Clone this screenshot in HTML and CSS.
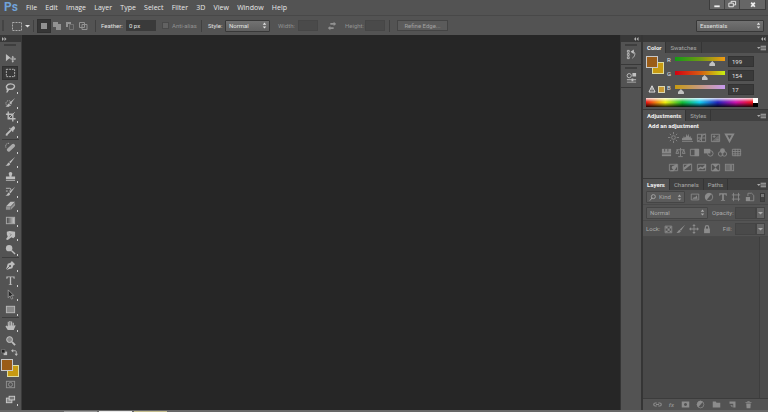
FILE: index.html
```html
<!DOCTYPE html>
<html lang="en">
<head>
<meta charset="utf-8">
<title>Photo editor</title>
<link rel="stylesheet" href="styles.css">
</head>
<body>
<svg class="defs" aria-hidden="true">
  <symbol id="updown" viewBox="0 0 5 8"><path d="M0.5 3L2.5 0.500L4.500 3zM0.500 5L2.500 7.500L4.500 5z"/></symbol>
  <symbol id="down" viewBox="0 0 5 8"><path d="M0 3h5L2.500 5.500z"/></symbol>
  <symbol id="flyout" viewBox="0 0 10 6"><path d="M0 2h4L2 4zM4 0.500h6v1H4zM4 2.500h6v1H4zM4 4.500h6v1H4z"/></symbol>
  <symbol id="marquee" viewBox="0 0 12 12"><rect x="1.500" y="2.500" width="9" height="8" class="line" stroke-dasharray="2 1"/></symbol>
  <symbol id="brush" viewBox="0 0 12 12"><path d="M11 1L6 8L4.500 6.500zM4 7l1.800 1.700C5 10.500 3 11 0.500 10.500C2.500 9.800 2.500 8 4 7z"/></symbol>
  <symbol id="move" viewBox="0 0 12 12"><path d="M6 0l2 2.500H6.500v3h3V4L12 6L9.500 8V6.500h-3v3H8L6 12L4 9.500h1.500v-3h-3V8L0 6l2.500-2v1.500h3v-3H4z"/></symbol>
  <symbol id="half" viewBox="0 0 12 12"><circle cx="6" cy="6" r="4.500" class="line"/><path d="M9 2.500A4.500 4.500 0 0 0 3 9.500z"/></symbol>
</svg>

<div class="app">
  <header class="menubar">
    <span class="logo">Ps</span>
    <nav class="menu">
      <a href="#">File</a><a href="#">Edit</a><a href="#">Image</a><a href="#">Layer</a><a href="#">Type</a><a href="#">Select</a><a href="#">Filter</a><a href="#">3D</a><a href="#">View</a><a href="#">Window</a><a href="#">Help</a>
    </nav>
    <div class="window-buttons">
      <button aria-label="Minimize"><svg viewBox="0 0 12 10"><path d="M3 6h6v2H3z"/></svg></button>
      <button aria-label="Restore"><svg viewBox="0 0 12 10"><path class="line" d="M5 3.500v-2h5v4H8M2.500 3.500H7.500v4h-5z"/></svg></button>
      <button class="close" aria-label="Close"><svg viewBox="0 0 12 10"><path class="line thick" d="M4 3l4 4.500M8 3L4 7.500"/></svg></button>
    </div>
  </header>

  <div class="options">
    <span class="grip"></span>
    <button class="preset" aria-label="Tool preset"><svg class="icon" viewBox="0 0 12 12"><use href="#marquee"/></svg><svg class="arrows"><use href="#down"/></svg></button>
    <span class="rule"></span>
    <div class="modes">
      <button class="on" aria-label="New selection"><svg class="icon" viewBox="0 0 12 12"><rect x="3" y="3" width="6" height="6" class="soft"/></svg></button>
      <button aria-label="Add to selection"><svg class="icon" viewBox="0 0 12 12"><path class="soft" d="M2 2h5v2h3v6H5V7H2z"/></svg></button>
      <button aria-label="Subtract from selection"><svg class="icon" viewBox="0 0 12 12"><path class="soft" d="M2 2h5v2H4v3H2z"/><path class="line" d="M5.500 4.500h4v5h-4z" opacity=".5"/></svg></button>
      <button aria-label="Intersect with selection"><svg class="icon" viewBox="0 0 12 12"><path class="line" d="M2.500 2.500h5v5h-5zM5 4.500h5v5H5z"/></svg></button>
    </div>
    <span class="rule"></span>
    <label class="field feather">Feather: <input type="text" value="0 px"></label>
    <label class="field anti dim"><input type="checkbox" disabled>Anti-alias</label>
    <span class="rule"></span>
    <label class="field style">Style: <span class="select"><select><option>Normal</option></select><svg class="arrows"><use href="#updown"/></svg></span></label>
    <label class="field size dim">Width: <input type="text" disabled></label>
    <button class="swap dim" aria-label="Swap width and height"><svg class="icon" viewBox="0 0 12 12"><path d="M4 2.500h4V1l3 2.500L8 6V4.500H4zM8 7.500H4V6L1 8.500L4 11V9.500h4z"/></svg></button>
    <label class="field size dim">Height: <input type="text" disabled></label>
    <span class="rule"></span>
    <button class="refine">Refine Edge...</button>
    <span class="select workspace"><select aria-label="Workspace"><option>Essentials</option></select><svg class="arrows"><use href="#updown"/></svg></span>
  </div>

  <main class="work">
    <aside class="tools">
      <div class="dock-head left"><svg viewBox="0 0 5 4"><path d="M0 0l2 2l-2 2zM2.500 0l2 2l-2 2z"/></svg></div>
      <span class="handle"></span>
      <div class="group six">
        <button aria-label="Move"><svg class="icon" viewBox="0 0 12 12"><path d="M1 1l6 5H4.500L1 9z"/><path d="M8.500 3l1.500 2H9v1h1.500V5L12 6.500L10.500 8V7H9v1.500h1L8.500 10.500L7 8.500h1V7H6V6h2V5H7z"/></svg></button>
        <button class="more on" aria-label="Marquee"><svg class="icon" viewBox="0 0 12 12"><use href="#marquee"/></svg></button>
        <button class="more" aria-label="Lasso"><svg class="icon" viewBox="0 0 12 12"><path class="line medium" d="M3 7.500C0 6 2 2 6 2s5 2.500 4 4s-4 2.500-7 1.500c-1 0-1 1.500 0 1.500s1-1 0-1.500M3 9c0 1-.5 2-1.500 2"/></svg></button>
        <button class="more" aria-label="Quick selection"><svg class="icon" viewBox="0 0 12 12"><use href="#brush"/><ellipse class="line" cx="4" cy="7" rx="3" ry="3" stroke-dasharray="1 1"/></svg></button>
        <button class="more" aria-label="Crop"><svg class="icon" viewBox="0 0 12 12"><path class="line medium" d="M3.500 0.500v8h8M1 3.500h7.500V11.500"/><path class="line" d="M4 8L10.500 1.500"/></svg></button>
        <button class="more" aria-label="Eyedropper"><svg class="icon" viewBox="0 0 12 12"><path d="M8 1c1-1.500 4 0 2.500 2.500L9 5l.5.500l-1 1l-4-4l1-1L6 3z"/><path class="line thick" d="M6.500 4.500L2 9l-.500 1.500"/></svg></button>
      </div>
      <div class="group eight">
        <button class="more" aria-label="Healing brush"><svg class="icon" viewBox="0 0 12 12"><path class="bandage" d="M4 8.500L9 4"/><path class="line" d="M1 6C0 3 2 1 4.500 1.500" stroke-dasharray="1 1"/></svg></button>
        <button class="more" aria-label="Brush"><svg class="icon" viewBox="0 0 12 12"><use href="#brush"/></svg></button>
        <button class="more" aria-label="Clone stamp"><svg class="icon" viewBox="0 0 12 12"><path d="M4 3a2 2 0 0 1 4 0L7 6h4v3H1V6h4zM1 10h10v1H1z"/></svg></button>
        <button class="more" aria-label="History brush"><svg class="icon" viewBox="0 0 12 12"><use href="#brush"/><path class="line" d="M1 2.500h4c2 0 2 2 0 2.500M1 5.500h2"/></svg></button>
        <button class="more" aria-label="Eraser"><svg class="icon" viewBox="0 0 12 12"><path d="M6 2h5L6 7H1z"/><path class="soft" d="M1 7.500h5v3H1zM6.500 7.500L11 3v3l-4.500 4.500z"/></svg></button>
        <button class="more" aria-label="Gradient"><svg class="icon" viewBox="0 0 12 12"><defs><linearGradient id="g"><stop stop-color="#444"/><stop offset="1" stop-color="#ccc"/></linearGradient></defs><rect x="1.500" y="2.500" width="9" height="7" fill="url(#g)" stroke="#aaa"/></svg></button>
        <button class="more" aria-label="Smudge"><svg class="icon" viewBox="0 0 12 12"><path d="M2 2l3-1l6 1v5l-2 2l-2-1l-4 3l-2-1l2-3l-1-2z"/><path d="M5 4l2 1l-2 2" fill="none" stroke="#777" stroke-width=".7"/></svg></button>
        <button class="more" aria-label="Dodge"><svg class="icon" viewBox="0 0 12 12"><circle cx="4.500" cy="4.500" r="3.500"/><path class="line medium" d="M7 7l4 4"/></svg></button>
      </div>
      <div class="group four">
        <button class="more" aria-label="Pen"><svg class="icon" viewBox="0 0 12 12"><path d="M7.500 1L11 4.500L9 6l-1 3l-7 2l2-7l3-1z"/><path d="M1 11l4-4" stroke="#444" stroke-width=".8"/><circle cx="5.500" cy="6.500" r="1" fill="#444"/></svg></button>
        <button class="more" aria-label="Type"><svg class="icon" viewBox="0 0 12 12"><path d="M1.500 1.500h9V4H9.500L9 2.500H6.700v7.500l1.300.5v.5H4v-.5l1.300-.5V2.500H3L2.500 4h-1z"/></svg></button>
        <button class="more" aria-label="Path selection"><svg class="icon" viewBox="0 0 12 12"><path d="M3.500 1l6 6H7l1.500 3.500l-1.500.5L5.500 7.500l-2 2z" fill="#292929" stroke="#aaa" stroke-width=".8"/></svg></button>
        <button class="more" aria-label="Rectangle"><svg class="icon" viewBox="0 0 12 12"><rect x="1.500" y="2.500" width="9" height="7" fill="#888" stroke="#bbb"/></svg></button>
      </div>
      <div class="group two">
        <button class="more" aria-label="Hand"><svg class="icon" viewBox="0 0 12 12"><path d="M3 11L0.500 7l1-1L3 7V2h1.200v4h.5V1H6v5h.6V1.500h1.200V6h.6V3h1.200v4l1-1.500l1 .5L9.500 11z"/></svg></button>
        <button aria-label="Zoom"><svg class="icon" viewBox="0 0 12 12"><circle cx="5" cy="5" r="3.200" fill="#888" stroke="#ccc"/><path class="line thick" d="M7.500 7.500L11 11"/></svg></button>
      </div>
      <div class="mini">
        <button aria-label="Default colors"><svg viewBox="0 0 8 8"><path d="M3 3h4v4H3z"/><path d="M.5.5h4v4h-4z" fill="#222" stroke="#888" stroke-width=".7"/></svg></button>
        <button aria-label="Swap colors"><svg viewBox="0 0 8 8"><path class="line" d="M2 2h3q1 0 1 1v3"/><path d="M0 2l2.500-2v4zM6 8L4 5.500h4z"/></svg></button>
      </div>
      <div class="swatches"><button class="back" aria-label="Background color"></button><button class="fore" aria-label="Foreground color"></button></div>
      <button class="bottom-tool" aria-label="Quick mask"><svg class="icon" viewBox="0 0 12 12"><g opacity=".6"><rect class="line" x="1.500" y="2.500" width="9" height="7"/><circle class="line" cx="6" cy="6" r="2.200"/></g></svg></button>
      <button class="bottom-tool more" aria-label="Screen mode"><svg class="icon" viewBox="0 0 12 12"><rect x="1.500" y="4.500" width="6" height="5" fill="#888" stroke="#ccc"/><rect x="4.500" y="2.500" width="6" height="4" fill="#777" stroke="#ccc"/></svg></button>
    </aside>

    <section class="canvas" aria-label="Canvas"></section>

    <aside class="icon-dock">
      <div class="dock-head"><svg viewBox="0 0 5 4"><path d="M2 0L0 2l2 2zM4.500 0l-2 2l2 2z"/></svg></div>
      <div class="cell"><span class="handle"></span><button aria-label="History"><svg class="icon" viewBox="0 0 12 12"><path class="line" d="M1.500 1.500h2v2h-2zM1.500 5h2v2h-2zM1.500 8.500h2v2h-2zM6 3h1c4 0 3 5 0 7"/><path d="M8.500.5v5L5 3z"/></svg></button></div>
      <div class="cell"><span class="handle"></span><button aria-label="Properties"><svg class="icon" viewBox="0 0 12 12"><circle class="line" cx="3.500" cy="4" r="2.300"/><path d="M7 1h4v4H7zM1 8h5V7h2v1h3v1H8v1H6V9H1zM1 10.500h10v1H1z"/></svg></button></div>
    </aside>

    <aside class="panels">
      <div class="dock-head"><svg viewBox="0 0 5 4"><path d="M2 0L0 2l2 2zM4.500 0l-2 2l2 2z"/></svg></div>

      <section class="panel">
        <div class="tabs"><button class="on">Color</button><button>Swatches</button><svg class="flyout"><use href="#flyout"/></svg></div>
        <div class="color">
          <div class="picks">
            <div class="swatches"><button class="back" aria-label="Background"></button><button class="fore" aria-label="Foreground"></button></div>
            <div class="gamut"><svg viewBox="0 0 8 8"><path class="line" d="M4 .8L7 7H1z"/><path d="M3.500 2.500h1v3h-1z"/></svg><button aria-label="Nearest printable color"></button></div>
          </div>
          <div class="sliders">
            <label for="r">R</label><input id="r" class="red" type="range" max="255" value="199"><input type="text" value="199" aria-label="Red value">
            <label for="gr">G</label><input id="gr" class="green" type="range" max="255" value="154"><input type="text" value="154" aria-label="Green value">
            <label for="b">B</label><input id="b" class="blue" type="range" max="255" value="17"><input type="text" value="17" aria-label="Blue value">
          </div>
          <div class="ramp"><span class="spectrum"></span><span class="mono"></span></div>
        </div>
      </section>

      <section class="panel">
        <div class="tabs"><button class="on">Adjustments</button><button>Styles</button><svg class="flyout"><use href="#flyout"/></svg></div>
        <div class="adjust">
          <h2>Add an adjustment</h2>
          <div class="icons">
            <button aria-label="Brightness"><svg class="icon" viewBox="0 0 12 12"><circle class="line" cx="6" cy="6" r="2"/><path class="line" d="M6 0v2.500M6 9.500V12M0 6h2.500M9.500 6H12M2 2l1.500 1.500M8.500 8.500L10 10M10 2L8.500 3.500M3.500 8.500L2 10"/></svg></button>
            <button aria-label="Levels"><svg class="icon" viewBox="0 0 12 12"><path d="M0 9V7l1-1v1l1-3v3l1-2l1 1l1-4l1 3l1-3l1 4l1-2l1 3l1-1v3zM0 10h12v1H0z"/></svg></button>
            <button aria-label="Curves"><svg class="icon" viewBox="0 0 12 12"><path class="line" d="M1.500 2.500h9v8h-9zM1.500 10q4-1 4.500-4t4.500-4M1.500 6.500h9M6 2.500v8"/></svg></button>
            <button aria-label="Exposure"><svg class="icon" viewBox="0 0 12 12"><path class="line" d="M1.500 2.500h9v8h-9zM3 5h3M4.500 3.500v3M7 8.500h2.500"/><path d="M10 3v7H2z" opacity=".5"/></svg></button>
            <button aria-label="Vibrance"><svg class="icon" viewBox="0 0 12 12"><path class="line thick" d="M2 2.500h8L6 10z"/></svg></button>
          </div>
          <div class="icons">
            <button aria-label="Hue"><svg class="icon" viewBox="0 0 12 12"><path d="M1 2h10v8H1z"/><path d="M4 2v3M7.500 2v3M1 7.500h10" stroke="#555"/></svg></button>
            <button aria-label="Color balance"><svg class="icon" viewBox="0 0 12 12"><path class="line" d="M6 1v9M1.500 3h9M3.500 10.500h5M2.500 3L1 7h3zM9.500 3L8 7h3z"/></svg></button>
            <button aria-label="Black and white"><svg class="icon" viewBox="0 0 12 12"><path class="line" d="M1.500 2.500h9v7h-9z"/><path d="M6 2h5v8H6z"/></svg></button>
            <button aria-label="Photo filter"><svg class="icon" viewBox="0 0 12 12"><path d="M1 2h7v5H1z"/><circle class="line" cx="8" cy="7" r="3"/></svg></button>
            <button aria-label="Channel mixer"><svg class="icon" viewBox="0 0 12 12"><circle cx="6" cy="4" r="2.700"/><circle class="line" cx="4" cy="7.500" r="2.500"/><circle class="line" cx="8" cy="7.500" r="2.500"/></svg></button>
            <button aria-label="Color lookup"><svg class="icon" viewBox="0 0 12 12"><path class="line" d="M1.500 2.500h9v7h-9zM4.500 2v8M7.500 2v8M1 5h10M1 7.500h10"/></svg></button>
          </div>
          <div class="icons">
            <button aria-label="Invert"><svg class="icon" viewBox="0 0 12 12"><path class="line" d="M1.500 2.500h9v7h-9z"/><path d="M2 10l4-2a2 2 0 0 1 0-4l4-2v3L8 8l-2 2z"/></svg></button>
            <button aria-label="Posterize"><svg class="icon" viewBox="0 0 12 12"><path class="line" d="M1.500 2.500h9v7h-9z"/><path d="M2 6l5-4h4L2 9z"/></svg></button>
            <button aria-label="Threshold"><svg class="icon" viewBox="0 0 12 12"><path class="line" d="M1.500 2.500h9v7h-9z"/><path d="M2 7l3-2l2 1l4-4v4L7 8L5 7L2 9z"/></svg></button>
            <button aria-label="Selective color"><svg class="icon" viewBox="0 0 12 12"><path class="line" d="M1.500 2.500h9v7h-9z"/><path d="M2 2h8L6 6zM2 10h8L6 6z"/></svg></button>
            <button aria-label="Gradient map"><svg class="icon" viewBox="0 0 12 12"><rect class="line" x="1.500" y="2.500" width="9" height="7"/><path d="M2 3h4v6H2z" opacity=".5"/><path d="M6 3h3v6H6z" opacity=".8"/></svg></button>
          </div>
        </div>
      </section>

      <section class="panel layers">
        <div class="tabs"><button class="on">Layers</button><button>Channels</button><button>Paths</button><svg class="flyout"><use href="#flyout"/></svg></div>
        <div class="row filter">
          <span class="select kind"><svg class="search" viewBox="0 0 8 8"><circle class="line" cx="5" cy="3" r="2.300"/><path class="line" d="M3.500 4.500L1 7.500"/></svg><select aria-label="Filter type"><option>Kind</option></select><svg class="arrows"><use href="#updown"/></svg></span>
          <div class="filters">
            <button aria-label="Pixel layers"><svg class="icon" viewBox="0 0 12 12"><path class="line" d="M1.500 2.500h9v7h-9z"/><path d="M3 8l2-2l1 1l2-3l1 4z"/></svg></button>
            <button aria-label="Adjustment layers"><svg class="icon" viewBox="0 0 12 12"><use href="#half"/></svg></button>
            <button aria-label="Type layers"><svg class="icon" viewBox="0 0 12 12"><path d="M1.500 1.500h9v3h-1l-.5-1.500H7v6.500h1.500v1h-5v-1H5V3H3l-.5 1.500h-1z"/></svg></button>
            <button aria-label="Shape layers"><svg class="icon" viewBox="0 0 12 12"><path class="line" d="M3 1v10M9 1v10M1 3.500h10M1 8.500h10"/></svg></button>
            <button aria-label="Smart objects"><svg class="icon" viewBox="0 0 12 12"><path class="line" d="M3.500 5V1.500H8L10.500 4v6.500H6"/><path d="M1 6h5v5H1z"/></svg></button>
          </div>
          <button class="toggle" aria-label="Filter on or off"></button>
        </div>
        <div class="row blend">
          <span class="select"><select aria-label="Blend mode"><option>Normal</option></select><svg class="arrows"><use href="#updown"/></svg></span>
          <label for="opacity">Opacity:</label>
          <span class="combo"><input id="opacity" type="text"><button aria-label="Opacity slider"><svg class="arrows"><use href="#down"/></svg></button></span>
        </div>
        <div class="row lock">
          <span>Lock:</span>
          <button aria-label="Lock transparency"><svg class="icon" viewBox="0 0 12 12"><path class="line" d="M2.500 2.500h8v8h-8z"/><path d="M3 3h2.500v2.500H3zM8 3h2v2.500H8zM5.500 5.500H8V8H5.500zM3 8h2.500v2H3zM8 8h2v2H8z"/></svg></button>
          <button aria-label="Lock pixels"><svg class="icon" viewBox="0 0 12 12"><use href="#brush"/></svg></button>
          <button aria-label="Lock position"><svg class="icon" viewBox="0 0 12 12"><use href="#move"/></svg></button>
          <button aria-label="Lock all"><svg class="icon" viewBox="0 0 12 12"><path class="line medium" d="M4 6V4q0-2 2-2t2 2v2"/><path d="M2.500 5.500h7v5.500h-7z"/></svg></button>
          <label for="fill">Fill:</label>
          <span class="combo"><input id="fill" type="text"><button aria-label="Fill slider"><svg class="arrows"><use href="#down"/></svg></button></span>
        </div>
        <div class="list"><span class="scroll"></span></div>
        <div class="footer">
          <button aria-label="Link layers"><svg class="icon" viewBox="0 0 12 12"><path class="line medium" d="M5 4H3q-2 0-2 2t2 2h2M7 4h2q2 0 2 2t-2 2H7M4 6h4"/></svg></button>
          <button class="fx" aria-label="Layer style">fx</button>
          <button aria-label="Add mask"><svg class="icon" viewBox="0 0 12 12"><path fill-rule="evenodd" d="M1 2h10v8H1zM6 4a2 2 0 1 0 .01 0z"/></svg></button>
          <button aria-label="New adjustment layer"><svg class="icon" viewBox="0 0 12 12"><use href="#half"/></svg></button>
          <button aria-label="New group"><svg class="icon" viewBox="0 0 12 12"><path d="M1 2h4l1 1.500h5V10H1z"/></svg></button>
          <button aria-label="New layer"><svg class="icon" viewBox="0 0 12 12"><path d="M2 2h8v8H7V5H2zM3 7h3v3z"/></svg></button>
          <button aria-label="Delete layer"><svg class="icon" viewBox="0 0 12 12"><path d="M2 2.500h2.500v-1h3v1H10v1H2zM3 4.500h6L8.500 11h-5z"/></svg></button>
        </div>
      </section>
    </aside>
  </main>
  <footer class="taskbar"><span></span><span></span><span></span></footer>
</div>
</body>
</html>
```

FILE: styles.css
```css
* { box-sizing: border-box; }

body {
  margin: 0;
  background: #262626;
  color: #e2e2e2;
  font: 6px/8px Roboto, "Open Sans", sans-serif;
}

button, input, select {
  margin: 0;
  padding: 0;
  border: 0;
  background: none;
  color: inherit;
  font: inherit;
  appearance: none;
}

button { display: grid; place-items: center; }
select, input { min-width: 0; }
a { color: inherit; text-decoration: none; }
svg { display: block; fill: currentColor; }
.defs { position: absolute; width: 0; height: 0; }
.line { fill: none; stroke: currentColor; }
.medium { stroke-width: 1.5; }
.thick { stroke-width: 2; }
.soft { fill: #929292; }
.bandage { fill: none; stroke: #aaa; stroke-width: 4; stroke-linecap: round; }
.icon { width: 12px; height: 12px; }
.arrows { width: 5px; height: 8px; }
.dim { color: #929292; }

.app { display: flex; flex-direction: column; height: 100vh; }

/* Menu bar */
.menubar {
  display: flex;
  flex: 0 0 16px;
  background: #535353;
  border-bottom: 1px solid #484848;
}
.logo {
  width: 26px;
  padding-left: 4px;
  color: #70a2d8;
  font: bold 12px/15px Roboto, sans-serif;
}
.menu {
  display: flex;
  justify-content: space-between;
  width: 261px;
  color: #e8e8e8;
  font: 7px/15px "Open Sans", sans-serif;
}
.window-buttons {
  display: flex;
  height: 10px;
  margin: 0 2px 0 auto;
  border: 1px solid #3c3c3c;
  border-top: 0;
  background: #666;
}
.window-buttons button { width: 15px; border-right: 1px solid #444; color: #eee; }
.window-buttons .close { width: 25px; border: 0; }
.window-buttons svg { width: 12px; height: 9px; }

/* Options bar */
.options {
  display: flex;
  flex: 0 0 19px;
  align-items: center;
  padding: 0 4px 0 2px;
  background: #535353;
}
.grip { width: 2px; height: 11px; background: #444; }
.preset { display: flex; align-items: center; gap: 2px; padding-left: 7px; }
.preset .icon { color: #aaa; }
.rule { width: 1px; height: 12px; margin: 0 4px 0 3px; background: #404040; }
.modes { display: flex; gap: 1px; margin-right: 3px; color: #929292; }
.modes .on { background: #363636; outline: 1px solid #303030; }
.field { display: flex; align-items: center; }
.field input { height: 11px; background: #3a3a3a; }
.field input[type="checkbox"] { width: 7px; height: 7px; margin-right: 3px; background: #626262; border: 1px solid #494949; }
.feather { justify-content: space-between; width: 55px; margin: 0 6px 0 1px; }
.feather input { width: 30px; padding-left: 3px; }
.anti { width: 36px; }
.style { justify-content: space-between; width: 62px; margin: 0 8px 0 2px; }
.style .select { width: 45px; }
.size { justify-content: space-between; width: 40px; margin-right: 1px; }
.size input { width: 20px; background: #4a4a4a; border: 1px solid #464646; }
.swap { padding: 0 8px; }
.swap .icon { width: 10px; height: 10px; }
.refine {
  height: 11px;
  width: 51px;
  margin-left: 3px;
  border: 1px solid #444;
  background: #5b5b5b;
  color: #a2a2a2;
}
.select {
  display: grid;
  align-items: center;
  height: 12px;
  border: 1px solid #383838;
  border-radius: 1px;
  background: linear-gradient(#727272, #606060);
}
.select > * { grid-area: 1 / 1; }
.select select { width: 100%; height: 10px; padding-left: 3px; line-height: 10px; }
.select .arrows { justify-self: end; margin-right: 2px; pointer-events: none; height: 7px; }
.workspace { width: 68px; margin-left: auto; }

/* Work area */
.work { display: flex; flex: 1; min-height: 0; }
.canvas { flex: 1; background: #262626; }
.dock-head {
  display: flex;
  flex: 0 0 7px;
  align-items: center;
  justify-content: flex-end;
  padding-right: 2px;
  background: #383838;
  color: #b0b0b0;
}
.dock-head.left { justify-content: flex-start; padding-left: 2px; }
.dock-head svg { width: 5px; height: 4px; }
.handle { display: block; height: 2px; width: 12px; margin: 2px auto; background: #3e3e3e; }

/* Tools */
.tools {
  display: flex;
  flex: 0 0 22px;
  flex-direction: column;
  background: #535353;
  border-right: 1px solid #3b3b3b;
  color: #bdbdbd;
}
.tools .handle { margin: 2px 4px 5px; }
.group { display: grid; grid-auto-rows: 1fr; margin: 0 2px; padding-right: 1px; border-bottom: 1px solid #3d3d3d; }
.six { height: 89px; }
.eight { height: 118px; }
.four { height: 60px; }
.two { height: 30px; border: 0; }
.more { background: linear-gradient(#d0d0d0, #d0d0d0) right bottom 1px / 1px 2px no-repeat; }
.more.on { background-color: #383838; outline: 1px solid #303030; outline-offset: -1px; }
.tools .icon { width: 11px; height: 11px; }
.mini { display: flex; justify-content: space-between; margin: 1px 3px 3px 1px; }
.mini svg { width: 7px; height: 7px; }
.swatches {
  display: grid;
  grid-template: repeat(3, 6px) / repeat(3, 6px);
}
.tools .swatches { margin-left: 1px; }
.swatches .fore { grid-area: 1 / 1 / 3 / 3; background: #9a5c18; border: 1px solid #c8c8c8; }
.swatches .back { grid-area: 2 / 2 / 4 / 4; background: #c79a11; border: 1px solid #dedca0; }
.bottom-tool { height: 15px; margin: 0 3px 0 2px; }

/* Collapsed dock */
.icon-dock { display: flex; flex: 0 0 23px; flex-direction: column; background: #535353; border: solid #353535; border-width: 0 2px 0 1px; }
.cell { height: 23px; border-bottom: 1px solid #383838; color: #c0c0c0; }
.cell button { margin: 0 auto; padding-top: 1px; }
.cell .icon { width: 11px; height: 11px; }

/* Panels */
.panels { display: flex; flex: 0 0 125px; flex-direction: column; background: #535353; }
.tabs { display: flex; height: 11px; background: #414141; color: #aaa; }
.tabs button { height: 11px; padding: 0 4px; border-right: 1px solid #353535; line-height: 10px; }
.tabs .on { background: #535353; color: #eee; font-weight: bold; }
.flyout { width: 9px; height: 6px; margin: 3px 2px 0 auto; }
.panel { border-bottom: 1px solid #383838; }
.color { display: grid; grid-template-columns: 21px 1fr; grid-template-rows: 42px 9px; padding: 3px 3px 2px; }
.picks { display: flex; flex-direction: column; justify-content: space-between; padding-bottom: 5px; }
.gamut { display: flex; align-items: center; gap: 2px; margin-left: 2px; }
.gamut svg { width: 8px; height: 8px; }
.gamut button { width: 7px; height: 7px; background: #c89a36; border: 1px solid #dcd7b0; }
.sliders {
  display: grid;
  grid-template-columns: 5px 50px 26px;
  grid-auto-rows: 14px;
  column-gap: 3px;
}
.sliders input[type="text"] { height: 11px; padding-left: 3px; background: #3a3a3a; border: 1px solid #333; }
.sliders input[type="range"] { width: 50px; height: 10px; }
.sliders input::-webkit-slider-runnable-track { height: 10px; background: var(--track) top 1px left 0 / 100% 4px no-repeat; }
.sliders input::-webkit-slider-thumb {
  appearance: none;
  width: 6px;
  height: 5px;
  margin-top: 5px;
  background: #c2c2c2;
  clip-path: polygon(50% 0, 100% 60%, 100% 100%, 0 100%, 0 60%);
}
.red { --track: linear-gradient(90deg, #159a17, #6e9a14 50%, #f39a11); }
.green { --track: linear-gradient(90deg, #d40011, #d55a11 50%, #c7f011); }
.blue { --track: linear-gradient(90deg, #c79a11, #c79a80 50%, #c79af0); }
.ramp { display: grid; grid-column: 1 / 3; grid-template-columns: 1fr 5px; width: 112px; height: 9px; }
.spectrum {
  background:
    linear-gradient(#fffd, #fff0 45%, #0000 50%, #000d),
    linear-gradient(90deg, #e11, #ee1 18%, #1b3 34%, #1ce 50%, #22b 67%, #c1a 84%, #e11);
}
.mono { background: linear-gradient(#fff 50%, #000 50%); }
.adjust { height: 57px; padding: 1px 3px; color: #888; }
.adjust h2 { margin: 0 0 0 2px; color: #f4f4f4; font: bold 6px/8px Roboto, sans-serif; }
.icons { display: flex; justify-content: center; gap: 3px; height: 15px; align-items: center; padding-right: 8px; }
.icons .icon { width: 11px; height: 11px; }

.layers { display: flex; flex: 1; flex-direction: column; min-height: 0; border: 0; color: #aaa; }
.row { display: flex; align-items: center; flex: 0 0 15px; padding-left: 3px; border-bottom: 1px solid #494949; }
.row .icon { width: 10px; height: 10px; color: #8c8c8c; }
.row .select { border-color: #454545; background: #5b5b5b; }
.kind { width: 39px; }
.kind select { padding-left: 12px; }
.search { width: 7px; height: 7px; margin-left: 2px; }
.filters { display: flex; flex: 1; justify-content: space-between; padding: 0 5px; }
.toggle { width: 5px; height: 9px; margin-right: 3px; border: 1px solid #3c3c3c; background: linear-gradient(#777 50%, #444 50%); }
.blend { flex-basis: 16px; }
.blend .select { width: 62px; }
.blend label { margin-left: 4px; }
.combo { display: grid; grid-template-columns: 21px 9px; height: 12px; margin: 0 3px 0 auto; }
.combo input { background: #4a4a4a; border: 1px solid #444; }
.combo button { background: #666; border: 1px solid #444; }
.lock { flex-basis: 16px; gap: 3px; }
.lock span:first-child { width: 14px; }
.lock label { margin-left: auto; }
.lock .combo { margin-left: 0; }
.list { display: flex; flex: 1; justify-content: flex-end; background: #484848; }
.scroll { width: 9px; border-left: 1px solid #3e3e3e; background: #4b4b4b; }
.footer { display: flex; justify-content: space-between; align-items: center; flex: 0 0 12px; padding: 0 15px 0 10px; border-top: 1px solid #3c3c3c; color: #8c8c8c; }
.footer .icon { width: 9px; height: 9px; }
.fx { font-style: italic; font-weight: bold; }

/* Task bar edge */
.taskbar { display: flex; gap: 2px; flex: 0 0 2px; padding: 1px 0 0 64px; background: #686868; }
.taskbar span { width: 33px; background: #999; }
.taskbar span:nth-child(2) { background: #e8e8e8; }
.taskbar span:nth-child(3) { background: #c5bd8d; }
```
